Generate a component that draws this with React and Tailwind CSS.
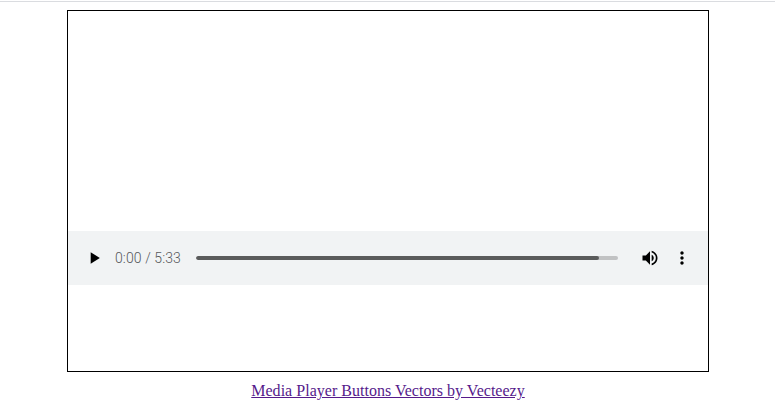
function Icon({ d, className = '' }) {
  return (
    <svg viewBox="0 0 24 24" className={`h-5 w-5 shrink-0 fill-black ${className}`} aria-hidden="true">
      <path d={d} />
    </svg>
  );
}

function AudioControls() {
  return (
    <div className="flex h-[54px] items-center bg-[#f1f3f4] pl-4 pr-4">
      <button aria-label="Play">
        <Icon d="M8 5v14l11-7z" />
      </button>
      <div className="ml-[11px] w-[81px] whitespace-nowrap font-[Roboto,sans-serif] text-[14px] leading-[20px] font-light tracking-[0.1px] text-[#55575a]">
        0:00 / 5:33
      </div>
      <div className="h-1 w-[422px] overflow-hidden rounded-full bg-[#c1c2c3]">
        <div className="h-full w-[403px] rounded-full bg-[#5a5b5b]" />
      </div>
      <button aria-label="Mute" className="ml-[22px]">
        <Icon d="M3 9v6h4l5 5V4L7 9H3zm13.5 3c0-1.77-1.02-3.29-2.5-4.03v8.05c1.48-.73 2.5-2.25 2.5-4.02zM14 3.23v2.06c2.89.86 5 3.54 5 6.71s-2.11 5.85-5 6.71v2.06c4.01-.91 7-4.49 7-8.77s-2.99-7.86-7-8.77z" />
      </button>
      <button aria-label="More" className="ml-3">
        <Icon d="M12 8c1.1 0 2-.9 2-2s-.9-2-2-2-2 .9-2 2 .9 2 2 2zm0 2c-1.1 0-2 .9-2 2s.9 2 2 2 2-.9 2-2-.9-2-2-2zm0 6c-1.1 0-2 .9-2 2s.9 2 2 2 2-.9 2-2-.9-2-2-2z" />
      </button>
    </div>
  );
}

export default function App() {
  return (
    <div className="h-[411px] overflow-hidden bg-white pt-px">
      <div className="h-px bg-[#dadce0]" />
      <main className="ml-[67px] mt-2 w-[642px]">
        <div className="h-[362px] border border-black pt-[220px]">
          <AudioControls />
        </div>
        <div className="mt-[9px] text-center font-['Liberation_Serif',serif] text-[16px] leading-[20px]">
          <a href="#" className="tracking-[0.02px] text-[#551a8b] underline">Media Player Buttons Vectors by Vecteezy</a>
        </div>
      </main>
    </div>
  );
}
